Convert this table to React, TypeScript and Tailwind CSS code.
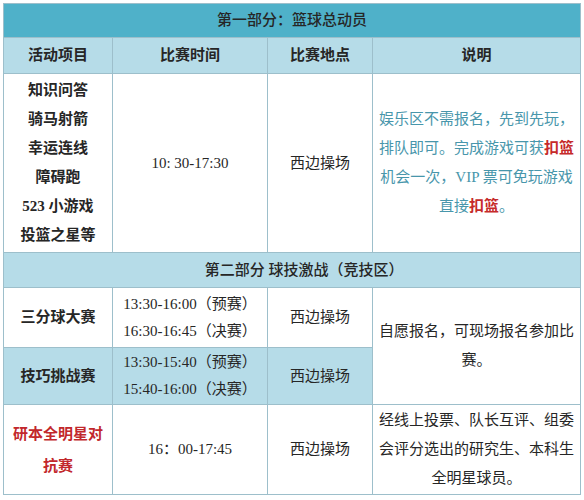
import React from "react";

const cjk = { fontFamily: '"Liberation Serif", "Noto Sans CJK SC", serif' };

export default function App() {
  const bd = "border border-[#9dbfcb]";
  return (
    <div className="w-[584px] h-[500px] bg-white pt-[3px] pl-[3px]" style={cjk}>
      <table className="table-fixed border-collapse w-[577px] text-[15px] text-[#262626] text-center">
        <colgroup>
          <col className="w-[109px]" />
          <col className="w-[155px]" />
          <col className="w-[105px]" />
          <col className="w-[208px]" />
        </colgroup>
        <tbody>
          {/* 第一部分 */}
          <tr className="h-[34px] bg-[#4fb1c9]">
            <td colSpan={4} className={`${bd} font-medium`}>
              第一部分：篮球总动员
            </td>
          </tr>
          <tr className="h-[36px] bg-[#b6dce8] font-bold">
            <td className={bd}>活动项目</td>
            <td className={bd}>比赛时间</td>
            <td className={bd}>比赛地点</td>
            <td className={bd}>说明</td>
          </tr>
          <tr className="h-[179px]">
            <td className={`${bd} font-bold leading-[29px]`}>
              知识问答
              <br />
              骑马射箭
              <br />
              幸运连线
              <br />
              障碍跑
              <br />
              523 小游戏
              <br />
              投篮之星等
            </td>
            <td className={bd}>10: 30-17:30</td>
            <td className={bd}>西边操场</td>
            <td className={`${bd} leading-[29px] text-[#4896ab]`}>
              娱乐区不需报名，先到先玩，
              <br />
              排队即可。完成游戏可获<b className="text-[#c62a2a]">扣篮</b>
              <br />
              机会一次，VIP 票可免玩游戏
              <br />
              直接<b className="text-[#c62a2a]">扣篮</b>。
            </td>
          </tr>

          {/* 第二部分 */}
          <tr className="h-[35px] bg-[#b6dce8]">
            <td colSpan={4} className={`${bd} font-medium pl-6`}>
              第二部分 球技激战（竞技区）
            </td>
          </tr>
          <tr className="h-[60px]">
            <td className={`${bd} font-bold`}>三分球大赛</td>
            <td className={`${bd} leading-[27px]`}>
              13:30-16:00（预赛）
              <br />
              16:30-16:45（决赛）
            </td>
            <td className={bd}>西边操场</td>
            <td rowSpan={2} className={`${bd} leading-[29px] bg-white`}>
              自愿报名，可现场报名参加比
              <br />
              赛。
            </td>
          </tr>
          <tr className="h-[57px] bg-[#b6dce8]">
            <td className={`${bd} font-bold`}>技巧挑战赛</td>
            <td className={`${bd} leading-[27px]`}>
              13:30-15:40（预赛）
              <br />
              15:40-16:00（决赛）
            </td>
            <td className={bd}>西边操场</td>
          </tr>
          <tr className="h-[90px]">
            <td className={`${bd} font-bold text-[#c2282c] leading-[32px]`}>
              研本全明星对
              <br />
              抗赛
            </td>
            <td className={bd}>16：00-17:45</td>
            <td className={bd}>西边操场</td>
            <td className={`${bd} leading-[29px]`}>
              经线上投票、队长互评、组委
              <br />
              会评分选出的研究生、本科生
              <br />
              全明星球员。
            </td>
          </tr>
        </tbody>
      </table>
    </div>
  );
}
